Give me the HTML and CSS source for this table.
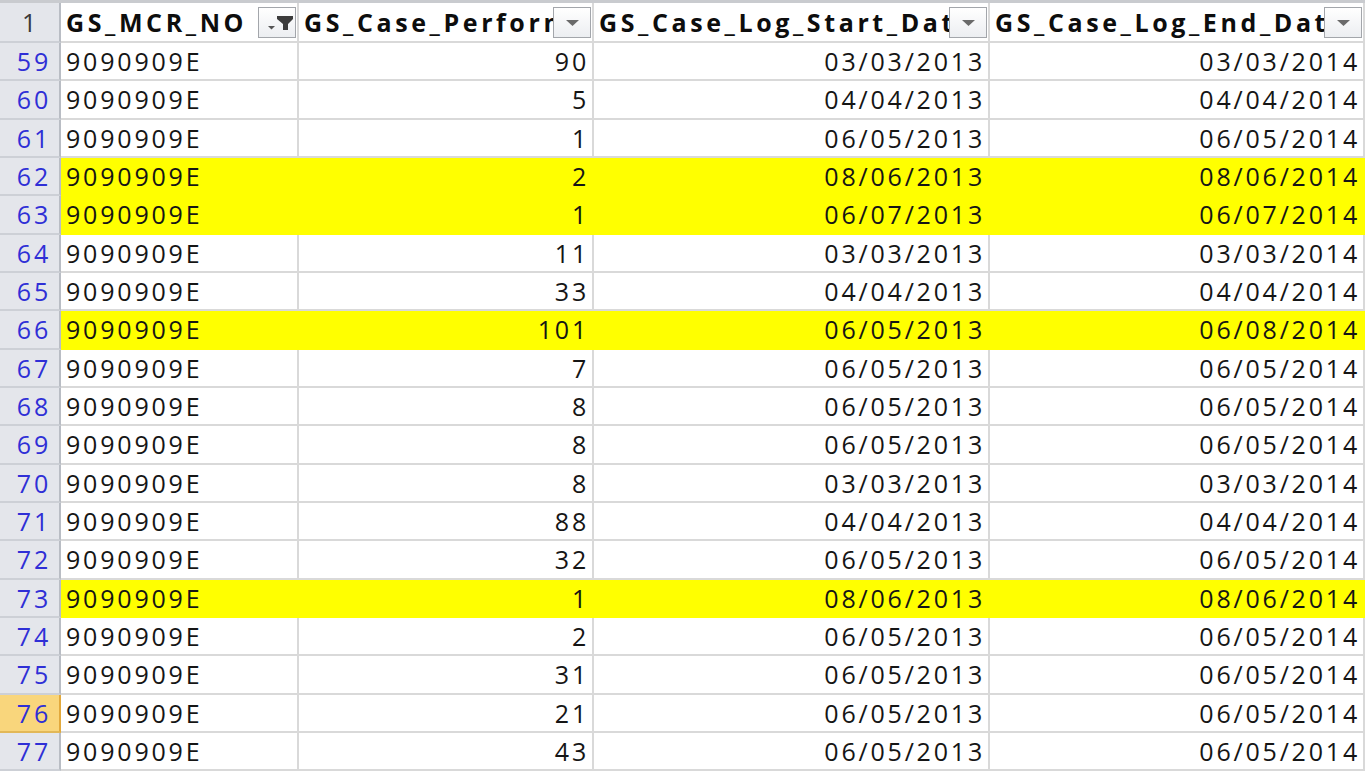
FILE: index.html
```html
<!DOCTYPE html>
<html>
<head>
<meta charset="utf-8">
<link rel="stylesheet" href="styles.css">
</head>
<body>
<div class="sheet">
  <div class="row head">
    <div class="rh corner">1</div>
    <div class="hc"><span class="ht">GS_MCR_NO</span><span class="fb"><svg width="36" height="29" viewBox="0 0 36 29"><polygon points="9,18 16,18 12.5,21.5" fill="#555"/><polygon points="18,8 34,8 34,11 29,16 29,22 24,22 24,16 18,11" fill="#3c3c3c"/></svg></span></div>
    <div class="hc"><span class="ht">GS_Case_Performed</span><span class="fb"><svg width="36" height="29" viewBox="0 0 36 29"><polygon points="12,12 25,12 18.5,18" fill="#6a6a6a"/></svg></span></div>
    <div class="hc"><span class="ht">GS_Case_Log_Start_Date</span><span class="fb"><svg width="36" height="29" viewBox="0 0 36 29"><polygon points="12,12 25,12 18.5,18" fill="#6a6a6a"/></svg></span></div>
    <div class="hc"><span class="ht">GS_Case_Log_End_Date</span><span class="fb"><svg width="36" height="29" viewBox="0 0 36 29"><polygon points="12,12 25,12 18.5,18" fill="#6a6a6a"/></svg></span></div>
  </div>
  <div class="row"><div class="rh">59</div><div class="c l">9090909E</div><div class="c">90</div><div class="c">03/03/2013</div><div class="c">03/03/2014</div></div>
  <div class="row"><div class="rh">60</div><div class="c l">9090909E</div><div class="c">5</div><div class="c">04/04/2013</div><div class="c">04/04/2014</div></div>
  <div class="row"><div class="rh">61</div><div class="c l">9090909E</div><div class="c">1</div><div class="c">06/05/2013</div><div class="c">06/05/2014</div></div>
  <div class="row yellow"><div class="rh">62</div><div class="c l">9090909E</div><div class="c">2</div><div class="c">08/06/2013</div><div class="c">08/06/2014</div></div>
  <div class="row yellow"><div class="rh">63</div><div class="c l">9090909E</div><div class="c">1</div><div class="c">06/07/2013</div><div class="c">06/07/2014</div></div>
  <div class="row"><div class="rh">64</div><div class="c l">9090909E</div><div class="c">11</div><div class="c">03/03/2013</div><div class="c">03/03/2014</div></div>
  <div class="row"><div class="rh">65</div><div class="c l">9090909E</div><div class="c">33</div><div class="c">04/04/2013</div><div class="c">04/04/2014</div></div>
  <div class="row yellow"><div class="rh">66</div><div class="c l">9090909E</div><div class="c">101</div><div class="c">06/05/2013</div><div class="c">06/08/2014</div></div>
  <div class="row"><div class="rh">67</div><div class="c l">9090909E</div><div class="c">7</div><div class="c">06/05/2013</div><div class="c">06/05/2014</div></div>
  <div class="row"><div class="rh">68</div><div class="c l">9090909E</div><div class="c">8</div><div class="c">06/05/2013</div><div class="c">06/05/2014</div></div>
  <div class="row"><div class="rh">69</div><div class="c l">9090909E</div><div class="c">8</div><div class="c">06/05/2013</div><div class="c">06/05/2014</div></div>
  <div class="row"><div class="rh">70</div><div class="c l">9090909E</div><div class="c">8</div><div class="c">03/03/2013</div><div class="c">03/03/2014</div></div>
  <div class="row"><div class="rh">71</div><div class="c l">9090909E</div><div class="c">88</div><div class="c">04/04/2013</div><div class="c">04/04/2014</div></div>
  <div class="row"><div class="rh">72</div><div class="c l">9090909E</div><div class="c">32</div><div class="c">06/05/2013</div><div class="c">06/05/2014</div></div>
  <div class="row yellow"><div class="rh">73</div><div class="c l">9090909E</div><div class="c">1</div><div class="c">08/06/2013</div><div class="c">08/06/2014</div></div>
  <div class="row"><div class="rh">74</div><div class="c l">9090909E</div><div class="c">2</div><div class="c">06/05/2013</div><div class="c">06/05/2014</div></div>
  <div class="row"><div class="rh">75</div><div class="c l">9090909E</div><div class="c">31</div><div class="c">06/05/2013</div><div class="c">06/05/2014</div></div>
  <div class="row"><div class="rh active">76</div><div class="c l">9090909E</div><div class="c">21</div><div class="c">06/05/2013</div><div class="c">06/05/2014</div></div>
  <div class="row"><div class="rh">77</div><div class="c l">9090909E</div><div class="c">43</div><div class="c">06/05/2013</div><div class="c">06/05/2014</div></div>
</div>
</body>
</html>
```

FILE: styles.css
```css
html, body {
  margin: 0;
  padding: 0;
  background: #ffffff;
  overflow: hidden;
}

.sheet {
  width: 1365px;
  height: 771px;
  display: flex;
  flex-direction: column;
  font-family: "Open Sans", "Noto Sans", sans-serif;
  font-size: 25px;
  letter-spacing: 2.8px;
  color: #151515;
}

.row {
  display: grid;
  grid-template-columns: 61px 238px 295px 396px 375px;
  height: 38.33px;
  flex: none;
}

.row > div {
  box-sizing: border-box;
  border-right: 2px solid #d9d9d9;
  border-bottom: 2px solid #d9d9d9;
  display: flex;
  align-items: center;
  white-space: nowrap;
  overflow: hidden;
}

.row.head {
  height: 43px;
  border-top: 3px solid #c9cbcf;
  box-sizing: border-box;
}

.rh {
  background: #e4e6eb;
  justify-content: flex-end;
  padding-right: 8px;
  color: #2f2fd6;
  border-right-color: #b9bdc4 !important;
  border-bottom-color: #cdd0d6 !important;
}

.rh.corner {
  color: #3a3a3a;
  justify-content: center;
  padding-right: 0;
  padding-left: 2px;
}

.rh.active {
  background: #f9d67c;
  border-right-color: #e2a93c !important;
  border-bottom-color: #e2b858 !important;
}

.c {
  justify-content: flex-end;
  padding-right: 3px;
}

.c.l {
  justify-content: flex-start;
  padding-left: 5px;
}

.row.yellow .c {
  background: #ffff00;
  border-color: #ffff00;
}

.hc {
  font-weight: 700;
  color: #0d0d0d;
  letter-spacing: 3.6px;
  padding-left: 5px;
  padding-right: 1px;
}

.ht {
  flex: 1;
  min-width: 0;
  overflow: hidden;
  text-overflow: clip;
}

.fb {
  flex: none;
  box-sizing: border-box;
  width: 38px;
  height: 31px;
  border: 1px solid #a3a6ab;
  background: linear-gradient(#ffffff, #eceef1);
  display: flex;
  align-items: center;
  justify-content: center;
}

.fb svg {
  display: block;
}
```
